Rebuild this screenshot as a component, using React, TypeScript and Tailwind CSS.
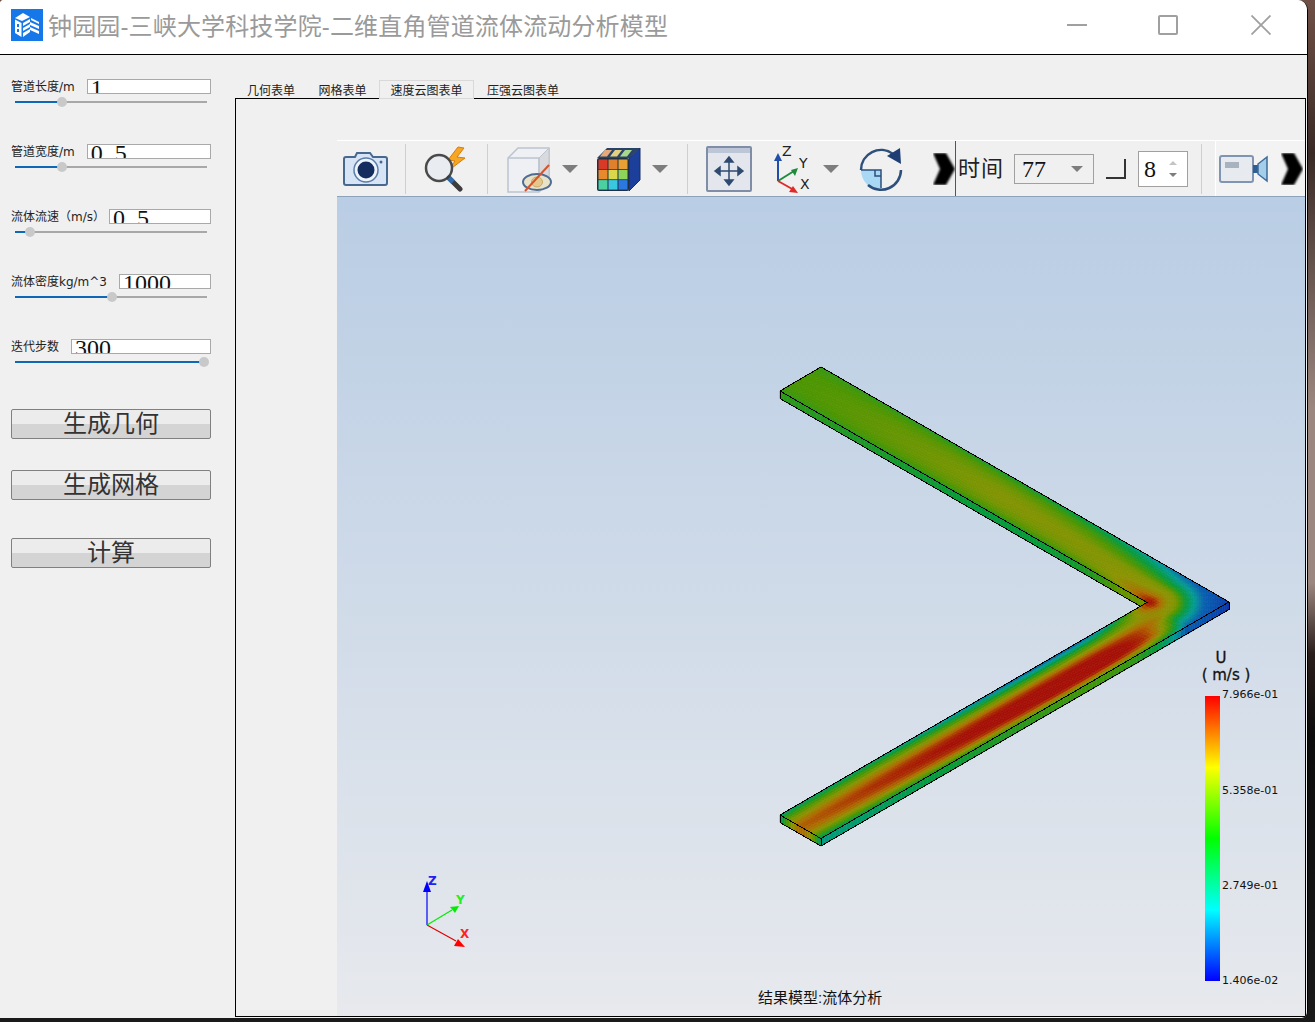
import React from "react";

type Pt = [number, number];

// model corners, in page pixels
const A: Pt = [780, 391];
const I: Pt = [1147, 602.5];
const E: Pt = [780, 815];
const W1: Pt = [41, -24];
const W2: Pt = [41, 23.5];
const DEPTH = 7.5;
const L = 8.9;

const clamp = (x: number) => Math.min(1, Math.max(0, x));
const mix = (a: number, b: number, t: number) => a + (b - a) * t;

const palette: [number, number[]][] = [
	[0, [10, 50, 170]],
	[0.14, [8, 95, 175]],
	[0.28, [5, 155, 150]],
	[0.42, [6, 155, 60]],
	[0.56, [75, 150, 0]],
	[0.7, [140, 148, 0]],
	[0.82, [175, 105, 0]],
	[0.92, [170, 45, 0]],
	[1, [165, 15, 5]],
];

const toColor = (f: number) => {
	const v = clamp(f);
	for (let i = 1; i < palette.length; i++) {
		if (v <= palette[i][0]) {
			const [a, ca] = palette[i - 1];
			const [b, cb] = palette[i];
			const t = (v - a) / (b - a);
			return `rgb(${ca.map((c, k) => Math.round(mix(c, cb[k], t))).join(",")})`;
		}
	}
	return "rgb(165,15,5)";
};

const cornerTable: Pt[] = [
	[0, 1],
	[0.1, 0.97],
	[0.25, 0.8],
	[0.35, 0.72],
	[0.5, 0.67],
	[0.65, 0.46],
	[0.83, 0.28],
	[1, 0.14],
	[1.42, 0.03],
];

const cornerField = (r: number) => {
	for (let i = 1; i < cornerTable.length; i++) {
		if (r <= cornerTable[i][0]) {
			const [a, fa] = cornerTable[i - 1];
			const [b, fb] = cornerTable[i];
			return mix(fa, fb, (r - a) / (b - a));
		}
	}
	return 0.03;
};

const upperField = (v: number, s: number) => {
	const dev = clamp((L - s) / (0.55 * L));
	const center = mix(0.56, 0.68, dev);
	const edge = mix(0.5, 0.42, dev);
	const prof = edge + (center - edge) * Math.pow(Math.max(0, 1 - (2 * v - 1) ** 2), 0.5);
	return mix(prof, cornerField(v), Math.exp(-s / (0.6 + 1.2 * v)));
};

const lowerField = (v: number, s: number) => {
	const t = s / L;
	const vp = mix(0.75, 0.5, t);
	const peak = mix(1.26, 0.84, t);
	const ei = mix(0.0, 0.34, clamp((t - 0.15) / 0.6));
	const eo = mix(0.7, 0.36, t);
	const prof =
		v < vp
			? peak - (peak - ei) * Math.pow((vp - v) / vp, 1.5)
			: peak - (peak - eo) * Math.pow((v - vp) / (1 - vp), 2);
	return mix(prof, cornerField(v), Math.exp(-s / 0.8));
};

type Quad = { points: string; fill: string };

const fmt = (pts: Pt[]) => pts.map((p) => `${p[0].toFixed(1)},${p[1].toFixed(1)}`).join(" ");

function buildMesh() {
	const quads: Quad[] = [];
	const NU = 100;
	const NV = 18;
	const e1: Pt = [I[0] - A[0], I[1] - A[1]];
	const e2: Pt = [E[0] - I[0], E[1] - I[1]];
	const up = (u: number, v: number): Pt => [A[0] + u * e1[0] + v * W1[0], A[1] + u * e1[1] + v * W1[1]];
	const low = (u: number, v: number): Pt => [I[0] + u * e2[0] + v * W2[0], I[1] + u * e2[1] + v * W2[1]];
	const cor = (p: number, q: number): Pt => [I[0] + p * W1[0] + q * W2[0], I[1] + p * W1[1] + q * W2[1]];
	const down = (p: Pt): Pt => [p[0], p[1] + DEPTH];

	// side walls go first, the top surface is painted over them
	for (let i = 0; i < NU; i++) {
		const u0 = i / NU;
		const u1 = (i + 1) / NU;
		quads.push({
			points: fmt([up(u0, 0), up(u1, 0), down(up(u1, 0)), down(up(u0, 0))]),
			fill: toColor(Math.min(0.62, upperField(0, (1 - (u0 + u1) / 2) * L))),
		});
		quads.push({
			points: fmt([low(u0, 1), low(u1, 1), down(low(u1, 1)), down(low(u0, 1))]),
			fill: toColor(lowerField(1, ((u0 + u1) / 2) * L) - 0.05),
		});
	}
	for (let i = 0; i < NV; i++) {
		const p0 = i / NV;
		const p1 = (i + 1) / NV;
		const pm = (p0 + p1) / 2;
		quads.push({
			points: fmt([cor(p0, 1), cor(p1, 1), down(cor(p1, 1)), down(cor(p0, 1))]),
			fill: toColor(cornerField(Math.hypot(pm, 1)) - 0.02),
		});
		quads.push({
			points: fmt([low(1, p0), low(1, p1), down(low(1, p1)), down(low(1, p0))]),
			fill: toColor(lowerField(pm, L) - 0.03),
		});
	}

	for (let i = 0; i < NU; i++) {
		for (let j = 0; j < NV; j++) {
			const u0 = i / NU;
			const u1 = (i + 1) / NU;
			const v0 = j / NV;
			const v1 = (j + 1) / NV;
			quads.push({
				points: fmt([up(u0, v0), up(u1, v0), up(u1, v1), up(u0, v1)]),
				fill: toColor(upperField((v0 + v1) / 2, (1 - (u0 + u1) / 2) * L)),
			});
			quads.push({
				points: fmt([low(u0, v0), low(u1, v0), low(u1, v1), low(u0, v1)]),
				fill: toColor(lowerField((v0 + v1) / 2, ((u0 + u1) / 2) * L)),
			});
		}
	}
	for (let i = 0; i < NV; i++) {
		for (let j = 0; j < NV; j++) {
			const p = (i + 0.5) / NV;
			const q = (j + 0.5) / NV;
			quads.push({
				points: fmt([cor(i / NV, j / NV), cor((i + 1) / NV, j / NV), cor((i + 1) / NV, (j + 1) / NV), cor(i / NV, (j + 1) / NV)]),
				fill: toColor(cornerField(Math.hypot(p, q))),
			});
		}
	}
	return quads;
}

const mesh = buildMesh();

const B: Pt = [A[0] + W1[0], A[1] + W1[1]];
const TIP: Pt = [I[0] + W1[0] + W2[0], I[1] + W1[1] + W2[1]];
const D: Pt = [E[0] + W2[0], E[1] + W2[1]];
const dn = (p: Pt): Pt => [p[0], p[1] + DEPTH];

function ModelView() {
	const ticks = [
		{ y: 697.5, label: "7.966e-01" },
		{ y: 793.5, label: "5.358e-01" },
		{ y: 888.5, label: "2.749e-01" },
		{ y: 983.5, label: "1.406e-02" },
	];
	return (
		<svg className="absolute inset-0 w-full h-full" viewBox="337 197 968 819">
			<defs>
				<linearGradient id="jet" x1="0" y1="0" x2="0" y2="1">
					<stop offset="0" stopColor="#ff0000" />
					<stop offset="0.25" stopColor="#ffff00" />
					<stop offset="0.5" stopColor="#00ff00" />
					<stop offset="0.75" stopColor="#00ffff" />
					<stop offset="1" stopColor="#0000ff" />
				</linearGradient>
			</defs>
			{mesh.map((q, i) => (
				<polygon key={i} points={q.points} fill={q.fill} stroke={q.fill} strokeWidth="0.6" />
			))}
			<g fill="none" stroke="#000" strokeWidth="1" shapeRendering="crispEdges">
				<polygon points={fmt([A, B, TIP, dn(TIP), dn(D), dn(E), E, I])} />
				<polyline points={fmt([E, D, TIP])} />
				<polyline points={fmt([A, dn(A), [I[0] - 6.5, I[1] + 3.75]])} />
				<polyline points={fmt([D, dn(D)])} />
			</g>

			<rect x="1205" y="696" width="15" height="285" fill="url(#jet)" />
			<g fontFamily="'DejaVu Sans', sans-serif" fontSize="11" fill="#111">
				{ticks.map((t) => (
					<text key={t.label} x="1222" y={t.y}>
						{t.label}
					</text>
				))}
			</g>
			<g fontFamily="'DejaVu Sans', sans-serif" fontSize="15" fill="#111" stroke="#111" strokeWidth="0.3" textAnchor="middle">
				<text x="1221" y="663">U</text>
				<text x="1226" y="680">( m/s )</text>
			</g>

			<g strokeWidth="1.2" fontFamily="'DejaVu Sans', sans-serif" fontWeight="700" fontSize="12">
				<line x1="427" y1="925" x2="427" y2="888" stroke="#0000ff" />
				<polygon points="427,881 431,892 423,892" fill="#0000ff" />
				<text x="428" y="885" fill="#2222ee">Z</text>
				<line x1="427" y1="925" x2="452" y2="910" stroke="#00ee00" />
				<polygon points="459,906 455,913 450,907" fill="#00ee00" />
				<text x="456" y="904" fill="#22ee22">Y</text>
				<line x1="427" y1="925" x2="456" y2="941" stroke="#e00000" />
				<polygon points="465,947 454,946 458,939" fill="#ff0000" />
				<text x="460" y="938" fill="#ff2222">X</text>
			</g>
		</svg>
	);
}

function CameraIcon() {
	return (
		<svg width="46" height="38" viewBox="0 0 46 38">
			<path d="M3 7h9l2-4h13l3 4h12a2 2 0 0 1 2 2v24a2 2 0 0 1-2 2H3a2 2 0 0 1-2-2V9a2 2 0 0 1 2-2z" fill="#d6e4f6" stroke="#47698f" strokeWidth="2" />
			<circle cx="23" cy="20" r="12" fill="#eef4fb" stroke="#5b7da6" strokeWidth="1.5" />
			<circle cx="23" cy="20" r="8.5" fill="#152c5e" />
			<circle cx="38" cy="12" r="1.5" fill="#47698f" />
		</svg>
	);
}

function SearchBoltIcon() {
	return (
		<svg width="48" height="46" viewBox="0 0 48 46">
			<path d="M34 1 24 14l7 1-7 10 17-13-8-1 7-9z" fill="#f5a623" stroke="#d97a10" strokeWidth="1" />
			<circle cx="15" cy="22" r="13" fill="#e9edf2" stroke="#4a4a4a" strokeWidth="2.5" />
			<path d="m25 32 11 11" stroke="#3c3c3c" strokeWidth="5" strokeLinecap="round" />
			<path d="m25 32 4 4" stroke="#2d6cb0" strokeWidth="5" />
		</svg>
	);
}

function HiddenCubeIcon() {
	return (
		<svg width="48" height="48" viewBox="0 0 48 48">
			<path d="M3 13 13 3h31v34l-10 10H3z" fill="#eef0f3" stroke="#bcc4cf" strokeWidth="1.5" />
			<path d="M34 13 44 3v34L34 47z" fill="#d8dade" stroke="#bcc4cf" strokeWidth="1" />
			<path d="M3 13h31v34" fill="none" stroke="#bcc4cf" strokeWidth="1.5" />
			<ellipse cx="32" cy="37" rx="14" ry="8" fill="#e8e2c8" stroke="#4f6d92" strokeWidth="2" />
			<ellipse cx="32" cy="37" rx="5.500" ry="5" fill="#e3c98d" stroke="#c9a86a" />
			<path d="M20 46 44 20" stroke="#d8532a" strokeWidth="2" />
		</svg>
	);
}

function ColorCubeIcon() {
	const front = ["#d93a28", "#e0802c", "#e8a034", "#e88a2c", "#d8d84a", "#8fd45a", "#4bd0a0", "#3ac8e0", "#2a78e0"];
	const top = ["#e8a878", "#e4cf80", "#a8d88c"];
	return (
		<svg width="46" height="48" viewBox="0 0 46 48">
			<path d="M33 13 44 3v32L33 46z" fill="#1c3f9c" stroke="#16305f" />
			<path d="M1 13 11 3h33L33 13z" fill="#2a4468" />
			{top.map((c, i) => (
				<path key={c} d={`M${4 + i * 10} 11.5l5-6.5h7l-5 6.5z`} fill={c} />
			))}
			<rect x="1" y="13" width="32" height="33" rx="2" fill="#1f2f46" />
			{front.map((c, i) => (
				<rect key={c} x={2.5 + (i % 3) * 10} y={14.5 + Math.floor(i / 3) * 10.3} width="9" height="9.5" fill={c} />
			))}
		</svg>
	);
}

function MoveIcon() {
	return (
		<svg width="46" height="46" viewBox="0 0 46 46">
			<rect x="1" y="1" width="44" height="44" rx="1" fill="#e3e6ec" stroke="#7f8ea6" strokeWidth="2" />
			<rect x="2" y="2" width="42" height="5" fill="#bcc6d6" />
			<g fill="#2f4a70" stroke="#2f4a70" strokeWidth="1.5">
				<path d="M23 14v22M12 25h22" fill="none" />
				<path d="m23 11 4 5h-8zM23 39l4-5h-8zM9 25l5-4v8zM37 25l-5-4v8z" />
			</g>
		</svg>
	);
}

function AxesIcon() {
	return (
		<svg width="42" height="50" viewBox="0 0 42 50">
			<g strokeWidth="2" fontFamily="'DejaVu Sans', sans-serif" fontSize="14">
				<path d="M4 37V14" stroke="#1f4fa8" />
				<path d="m4 9 4 8H0z" fill="#1f4fa8" />
				<path d="M4 37 20 27" stroke="#1d8a3c" />
				<path d="m24 24-3 8-4-6z" fill="#1d8a3c" />
				<path d="m4 37 16 9" stroke="#e02a2a" />
				<path d="m24 49-9-1 4-6z" fill="#e02a2a" />
				<text x="8" y="12" fill="#222">Z</text>
				<text x="25" y="24" fill="#222">Y</text>
				<text x="26" y="45" fill="#222">X</text>
			</g>
		</svg>
	);
}

function RotateIcon() {
	return (
		<svg width="46" height="46" viewBox="0 0 46 46">
			<path d="M3 24h20v20A20 20 0 0 1 3 24z" fill="#a9d8f5" />
			<path d="M3 24h20v18M17 24v6h6" fill="none" stroke="#2d4f7a" strokeWidth="1.5" />
			<path d="M3 24A20 20 0 0 1 35 8" fill="none" stroke="#2d4f7a" strokeWidth="2.5" />
			<path d="M43 24A20 20 0 0 1 10 39" fill="none" stroke="#2d4f7a" strokeWidth="2.5" />
			<path d="m29 10 13-8 1 16z" fill="#1f3f74" />
		</svg>
	);
}

function VideoIcon() {
	return (
		<svg width="50" height="28" viewBox="0 0 50 28">
			<rect x="1" y="1" width="33" height="26" rx="2" fill="#e7eaef" stroke="#7f95b3" strokeWidth="2" />
			<rect x="6" y="7" width="14" height="6" fill="#a9b2bf" />
			<path d="M34 10h5v8h-5z" fill="#2f5f92" />
			<path d="m39 9 9-7v24l-9-7z" fill="#a5cfe8" stroke="#3e6b9a" strokeWidth="1.5" />
		</svg>
	);
}

function Chevron() {
	return (
		<svg width="22" height="32" viewBox="0 0 22 32">
			<defs>
				<filter id="soft">
					<feGaussianBlur stdDeviation="1.1" />
				</filter>
			</defs>
			<path d="M0 0h13l9 16-9 16H0l7-16z" fill="#000" filter="url(#soft)" />
		</svg>
	);
}

function DropArrow() {
	return <div className="w-0 h-0 border-x-[8px] border-x-transparent border-t-[8px] border-t-[#7d7d7d]" />;
}

function ToolSep() {
	return <div className="w-px h-[50px] bg-[#cfcfcf]" />;
}

function Logo() {
	return (
		<svg width="32" height="32" viewBox="0 0 32 32">
			<rect width="32" height="32" fill="#1677e8" />
			<path d="m4 9 8-5 7 4-8 4z" fill="#fff" />
			<path d="M4 10.500 10.500 14v14L4 24z" fill="#fff" />
			<path d="m12 14 7-4v3l-7 4zM12 19l7-4v3l-7 4zM12 24l7-4v3l-7 5z" fill="#fff" />
			<path d="m19 13 9 4v3l-9-4zM19 18l9 4v3l-9-4zM20 9l8 4v2l-8-4z" fill="#fff" />
			<path d="M6 15h2v3H6zM6 20h2v3H6z" fill="#1677e8" />
		</svg>
	);
}

function Slider({ percent }: { percent: number }) {
	return (
		<div className="relative mt-[3px] ml-[4px] w-[192px] h-[10px] flex items-center">
			<div className="w-full h-[2px] bg-[#a8a8a8]">
				<div className="h-full bg-[#0f67b5]" style={{ width: `${percent}%` }} />
			</div>
			<div
				className="absolute top-0 -ml-[5px] w-[10px] h-[10px] rounded-full bg-[#c9c9c9]"
				style={{ left: `${percent}%` }}
			/>
		</div>
	);
}

function Field({
	label,
	value,
	percent,
	labelClass = "",
}: {
	label: string;
	value: React.ReactNode;
	percent: number;
	labelClass?: string;
}) {
	return (
		<div className="h-[65px]">
			<div className="flex items-center gap-[12px] w-[200px] h-[15px]">
				<span className={`text-xs whitespace-nowrap text-[#222] font-['DejaVu_Sans','Noto_Sans_CJK_SC',sans-serif] ${labelClass}`}>{label}</span>
				<div className="flex-1 h-[15px] overflow-hidden bg-white border border-[#a9a9a9] pl-[3px] font-['Liberation_Serif',serif] text-2xl leading-[16px] text-[#111] whitespace-nowrap">
					{value}
				</div>
			</div>
			<Slider percent={percent} />
		</div>
	);
}

function ActionButton({ label, className }: { label: string; className: string }) {
	return (
		<button
			className={`w-[200px] h-[30px] rounded-[2px] border border-[#808080] bg-[linear-gradient(#ececec_50%,#d4d4d4_50%)] text-2xl leading-[28px] text-[#333] ${className}`}
		>
			{label}
		</button>
	);
}

const half = (
	<>
		0<span className="inline-block w-[12px]">.</span>5
	</>
);

export default function App() {
	return (
		<div className="w-[1315px] h-[1022px] overflow-hidden bg-[linear-gradient(#6f5046_0%,#3a2a26_15%,#9c8780_40%,#9c8780_57%,#2a1e1c_64%,#0c0c0c_72%,#1a1a1a_100%)] font-['Liberation_Sans','Noto_Sans_CJK_SC',sans-serif]">
			<div className="w-[1308px] h-[1018px] flex flex-col rounded-tr-[10px] rounded-tl-[4px] rounded-br-[6px] overflow-hidden bg-[#f0f0f0] border-r border-black">
				<header className="h-[55px] shrink-0 flex items-center bg-white border-b border-black">
					<div className="ml-[11px] -mt-[4px]">
						<Logo />
					</div>
					<h1 className="ml-[5px] text-2xl tracking-[0.15px] text-[#9a9a9a] font-normal">钟园园-三峡大学科技学院-二维直角管道流体流动分析模型</h1>
					<div className="ml-auto flex items-center mr-[36px] -mt-[4px]">
						<div className="w-[20px] h-[2px] bg-[#a0a0a0]" />
						<div className="ml-[71px] w-[20px] h-[20px] rounded-[2px] border-2 border-[#a0a0a0]" />
						<svg className="ml-[73px]" width="20" height="20" viewBox="0 0 20 20">
							<path d="m0.500 0.500 19 19M19.500 0.500l-19 19" stroke="#a0a0a0" strokeWidth="1.800" />
						</svg>
					</div>
				</header>

				<div className="flex-1 flex min-h-0">
					<aside className="w-[235px] shrink-0 pl-[11px] pt-[24px]">
						<Field label="管道长度/m" value="1" percent={24.5} />
						<Field label="管道宽度/m" value={half} percent={24.5} />
						<Field label="流体流速（m/s）" value={half} percent={8} labelClass="-mr-[8px]" />
						<Field label="流体密度kg/m^3" value="1000" percent={50.5} />
						<Field label="迭代步数" value="300" percent={98.5} />
						<ActionButton label="生成几何" className="mt-[5px] block" />
						<ActionButton label="生成网格" className="mt-[31px] block" />
						<ActionButton label="计算" className="mt-[38px] block" />
					</aside>

					<div className="flex-1 flex flex-col pt-[25px] pr-px pb-px min-w-0">
						<div className="flex h-[18px] pl-px text-xs leading-[23px] text-[#222]">
							<div className="w-[70px] text-center">几何表单</div>
							<div className="w-[73px] text-center">网格表单</div>
							<div className="relative z-10 w-[95px] h-[19px] text-center leading-[21px] bg-[#f0f0f0] border border-[#d9d9d9]">速度云图表单</div>
							<div className="w-[98px] text-center">压强云图表单</div>
						</div>
						<div className="flex-1 flex border border-black min-h-0">
							<div className="w-[101px] shrink-0" />
							<div className="flex-1 flex flex-col min-w-0 pt-[41px]">
								<div className="h-[57px] shrink-0 flex items-center border-t border-t-white border-b border-b-[#8ea3bb] bg-[#f0f0f0]">
									<div className="ml-[6px] shrink-0"><CameraIcon /></div>
									<div className="ml-[16px] shrink-0"><ToolSep /></div>
									<div className="ml-[18px] shrink-0"><SearchBoltIcon /></div>
									<div className="ml-[15px] shrink-0"><ToolSep /></div>
									<div className="ml-[17px] shrink-0"><HiddenCubeIcon /></div>
									<div className="ml-[9px] shrink-0"><DropArrow /></div>
									<div className="ml-[18px] shrink-0"><ColorCubeIcon /></div>
									<div className="ml-[10px] shrink-0"><DropArrow /></div>
									<div className="ml-[19px] shrink-0"><ToolSep /></div>
									<div className="ml-[18px] shrink-0"><MoveIcon /></div>
									<div className="ml-[22px] shrink-0"><AxesIcon /></div>
									<div className="ml-[7px] shrink-0"><DropArrow /></div>
									<div className="ml-[19px] shrink-0"><RotateIcon /></div>
									<div className="ml-[29px] shrink-0"><Chevron /></div>
									<div className="w-px self-stretch shrink-0 bg-[#555]" />
									<span className="ml-[2px] w-[45px] shrink-0 text-[22px] tracking-[1px] whitespace-nowrap text-[#222]">时间</span>
									<div className="ml-[11px] w-[80px] h-[30px] shrink-0 flex items-center justify-between border border-[#a0a0a0] pl-[7px] pr-[10px] font-['Liberation_Serif',serif] text-2xl text-[#111]">
										77
										<div className="w-0 h-0 border-x-[6px] border-x-transparent border-t-[6px] border-t-[#7d7d7d]" />
									</div>
									<div className="ml-[12px] w-[20px] h-[20px] shrink-0 border-r-2 border-b-2 border-r-[#333] border-b-[#333]" />
									<div className="ml-[12px] w-[50px] h-[36px] shrink-0 flex items-center justify-between bg-white border border-[#a0a0a0] pl-[5px] pr-[10px] font-['Liberation_Serif',serif] text-2xl text-[#111]">
										8
										<div className="flex flex-col gap-[8px]">
											<div className="w-0 h-0 border-x-[4px] border-x-transparent border-b-[4px] border-b-[#c4c4c4]" />
											<div className="w-0 h-0 border-x-[4px] border-x-transparent border-t-[4px] border-t-[#7d7d7d]" />
										</div>
									</div>
									<div className="ml-[13px] shrink-0"><ToolSep /></div>
									<div className="ml-[13px] flex-1 self-stretch flex items-center border-l border-l-white bg-[#f3f3f3]">
										<div className="ml-[3px] shrink-0"><VideoIcon /></div>
										<div className="ml-[12px] shrink-0"><Chevron /></div>
									</div>
								</div>
								<div className="relative flex-1 min-h-0 bg-[linear-gradient(#b9cde4,#e7e9ed)]">
									<ModelView />
									<div className="absolute bottom-[9px] left-[421px] text-[15px] leading-[18px] text-[#111] whitespace-nowrap">
										结果模型:流体分析
									</div>
								</div>
							</div>
						</div>
					</div>
				</div>
			</div>
		</div>
	);
}
